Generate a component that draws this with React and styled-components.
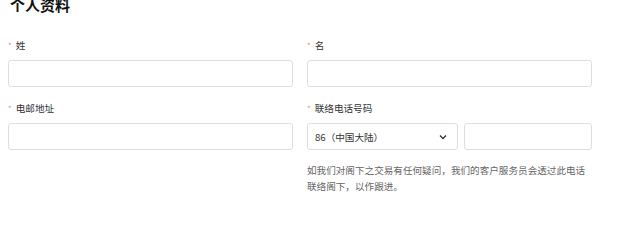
import React from "react";
import styled, { createGlobalStyle } from "styled-components";

const Global = createGlobalStyle`
  html, body { margin: 0; padding: 0; background: #fff; }
  body { font-family: "Noto Sans CJK SC", "Noto Sans", sans-serif; color: #333; }
`;

const Page = styled.div`
  width: 638px;
  height: 214px;
  overflow: hidden;
  padding-left: 8px;
  box-sizing: border-box;
`;

const Title = styled.h1`
  margin: -4px 0 0 2px;
  font-size: 15px;
  line-height: 17px;
  font-weight: 700;
  color: #111;
`;

const Grid = styled.div`
  display: grid;
  grid-template-columns: 285px 285px;
  column-gap: 14px;
  margin-top: 25px;
`;

const Field = styled.div`
  display: flex;
  flex-direction: column;
  margin-bottom: ${(p) => (p.$last ? 0 : 14)}px;
`;

const Label = styled.div`
  display: flex;
  align-items: center;
  gap: 4px;
  height: 14px;
  font-size: 9.6px;
  line-height: 14px;
  color: #333;
  margin-bottom: 8px;
`;

const Star = styled.span`
  color: #ec8a8f;
  font-size: 8px;
  line-height: 8px;
  margin-top: 2px;
`;

const Input = styled.div`
  box-sizing: border-box;
  height: 27px;
  border: 1px solid #dedede;
  border-radius: 3px;
  background: #fff;
  flex: ${(p) => p.$grow || "none"};
`;

const PhoneRow = styled.div`
  display: flex;
  gap: 6px;
`;

const Select = styled.div`
  box-sizing: border-box;
  height: 27px;
  width: 151px;
  border: 1px solid #dedede;
  border-radius: 3px;
  display: flex;
  align-items: center;
  justify-content: space-between;
  padding: 0 10px 0 7px;
  font-size: 9.6px;
  color: #333;
`;

const Help = styled.p`
  margin: 12px 0 0 0;
  font-size: 9.6px;
  line-height: 16px;
  color: #666;
  width: 285px;
`;

export default function App() {
  return (
    <Page>
      <Global />
      <Title>个人资料</Title>
      <Grid>
        <Field>
          <Label><Star>*</Star>姓</Label>
          <Input />
        </Field>
        <Field>
          <Label><Star>*</Star>名</Label>
          <Input />
        </Field>
        <Field $last>
          <Label><Star>*</Star>电邮地址</Label>
          <Input />
        </Field>
        <Field $last>
          <Label><Star>*</Star>联络电话号码</Label>
          <PhoneRow>
            <Select>
              <span>86（中国大陆）</span>
              <svg width="8" height="6" viewBox="0 0 8 6">
                <polyline points="1,1.5 4,4.5 7,1.5" fill="none" stroke="#333" strokeWidth="1.3" />
              </svg>
            </Select>
            <Input $grow="1" />
          </PhoneRow>
          <Help>如我们对阁下之交易有任何疑问，我们的客户服务员会透过此电话联络阁下，以作跟进。</Help>
        </Field>
      </Grid>
    </Page>
  );
}
